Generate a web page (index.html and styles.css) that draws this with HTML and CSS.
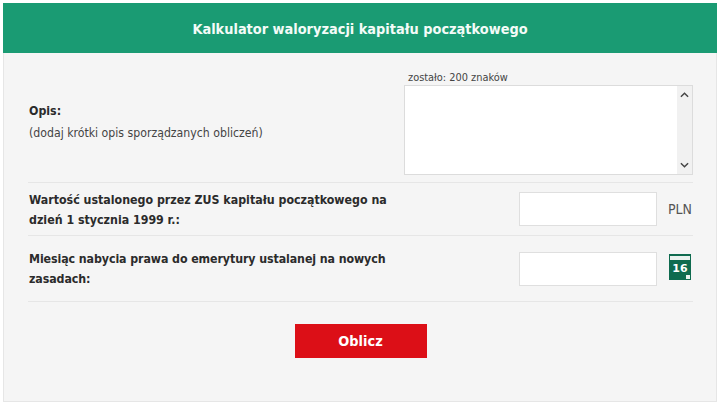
FILE: index.html
```html
<!DOCTYPE html>
<html lang="pl">
<head>
<meta charset="utf-8">
<title>Kalkulator waloryzacji kapitału początkowego</title>
<link rel="stylesheet" href="styles.css">
</head>
<body>
<main class="panel">
  <h1 class="panel-title">Kalkulator waloryzacji kapitału początkowego</h1>
  <form class="panel-body">
    <div class="row row-desc">
      <div class="label">
        <strong>Opis:</strong>
        <span class="hint">(dodaj krótki opis sporządzanych obliczeń)</span>
      </div>
      <div class="desc-field">
        <span class="counter">zostało: 200 znaków</span>
        <div class="textarea-box">
          <textarea class="textarea"></textarea>
          <div class="scrollbar">
            <svg class="chev" viewBox="0 0 10 6"><path d="M1 5l4-4 4 4" fill="none" stroke="#444" stroke-width="1.6"/></svg>
            <svg class="chev" viewBox="0 0 10 6"><path d="M1 1l4 4 4-4" fill="none" stroke="#444" stroke-width="1.6"/></svg>
          </div>
        </div>
      </div>
    </div>
    <div class="row row-value">
      <strong class="label">Wartość ustalonego przez ZUS kapitału początkowego na dzień 1 stycznia 1999 r.:</strong>
      <input class="input" type="text">
      <span class="unit">PLN</span>
    </div>
    <div class="row row-month">
      <strong class="label">Miesiąc nabycia prawa do emerytury ustalanej na nowych zasadach:</strong>
      <input class="input" type="text">
      <span class="cal-wrap">
        <span class="cal"><span class="cal-bar"></span><span class="cal-num">16</span><span class="cal-corner"></span></span>
      </span>
    </div>
    <div class="actions"><button class="btn" type="button">Oblicz</button></div>
  </form>
</main>
</body>
</html>
```
FILE: styles.css
```css
* { box-sizing: border-box; }
html, body { margin: 0; background: #fff; }
body {
  padding: 3px;
  font-family: "DejaVu Sans", "Liberation Sans", sans-serif;
  color: #333;
}
.panel {
  width: 714px;
  height: 399px;
  background: #f5f5f5;
  border: 1px solid #e6e6e6;
  border-top: 0;
}
.panel-title {
  margin: 0 -1px;
  height: 50px;
  background: #1a9b73;
  color: #f4fbf8;
  font-size: 14.4px;
  font-family: "DejaVu Sans Condensed", "DejaVu Sans", sans-serif;
  font-weight: 700;
  line-height: 52px;
  text-align: center;
}
.panel-body { padding: 0 23px 0 24px; }
.row {
  display: flex;
  align-items: center;
  border-bottom: 1px solid #e6e6e6;
}
.row-desc { height: 130px; padding-top: 16px; }
.row-value { height: 53px; }
.row-month { height: 66px; }
.label {
  flex: none;
  width: 376px;
  padding: 2px 0 0 1px;
  font-family: "DejaVu Sans Condensed", "DejaVu Sans", sans-serif;
  font-size: 12.3px;
  line-height: 20px;
  color: #2b2b2b;
}
.row-month .label { padding-top: 0; letter-spacing: -0.09px; }
.row-desc .label { display: flex; flex-direction: column; gap: 2px; padding-top: 0; margin-top: -7px; }
.hint { color: #444; font-size: 12.2px; }
.desc-field { flex: none; display: flex; flex-direction: column; margin-top: -6px; }
.counter {
  padding-left: 4px;
  font-family: "DejaVu Sans Condensed", "DejaVu Sans", sans-serif;
  font-size: 10.9px;
  line-height: 15px;
  color: #444;
}
.textarea-box {
  display: flex;
  width: 289px;
  height: 90px;
  background: #fff;
  border: 1px solid #dcdcdc;
}
.textarea {
  flex: 1;
  border: 0;
  padding: 0;
  resize: none;
  outline: 0;
  background: transparent;
}
.scrollbar {
  width: 15px;
  background: #f1f1f1;
  display: flex;
  flex-direction: column;
  justify-content: space-between;
  align-items: center;
  padding: 6px 0;
}
.chev { width: 9px; height: 6px; display: block; }
.input {
  width: 138px;
  height: 34px;
  margin-left: 115px;
  background: #fff;
  border: 1px solid #dfdfdf;
  outline: 0;
}
.unit {
  margin-left: 11px;
  font-family: "DejaVu Sans Condensed", "DejaVu Sans", sans-serif;
  font-size: 14px;
  color: #555;
}
.cal-wrap { margin: 0 0 4px 12px; }
.cal {
  position: relative;
  display: block;
  width: 22px;
  height: 26px;
  background: #0f6b4f;
  overflow: hidden;
}
.cal-bar {
  position: absolute;
  left: 1px;
  right: 1px;
  top: 2px;
  height: 4px;
  background: #e9f2ee;
}
.cal-num {
  position: absolute;
  left: 0;
  right: 0;
  top: 8px;
  text-align: center;
  font-family: "DejaVu Sans", sans-serif;
  font-weight: 700;
  font-size: 11px;
  line-height: 13px;
  color: #fff;
}
.cal-corner {
  position: absolute;
  right: 1px;
  bottom: 1px;
  width: 4px;
  height: 4px;
  background: #e9f2ee;
}
.actions {
  display: flex;
  justify-content: center;
  padding: 22px 0 0 0;
}
.btn {
  width: 132px;
  height: 34px;
  border: 0;
  background: #dc0f17;
  color: #fff;
  font-family: "DejaVu Sans Condensed", "DejaVu Sans", sans-serif;
  font-size: 14.4px;
  font-weight: 700;
}
```
